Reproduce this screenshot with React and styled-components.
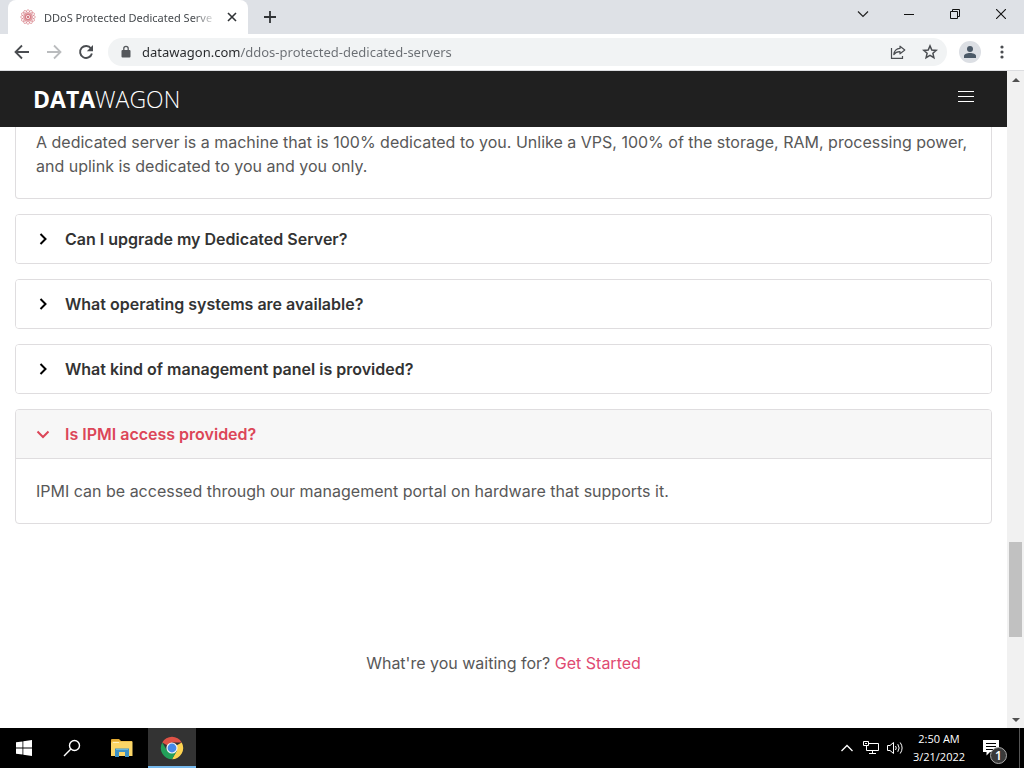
import React, { useState } from "react";
import styled, { createGlobalStyle, css } from "styled-components";

const uiFont = '"Noto Sans", "Open Sans", sans-serif';
const siteFont = 'Inter, "Liberation Sans", sans-serif';

const GlobalStyle = createGlobalStyle`
  *, *::before, *::after { box-sizing: border-box; }
  body { margin: 0; background: #fff; }
  button, input { font: inherit; margin: 0; padding: 0; border: 0; background: none; color: inherit; }
  button { cursor: pointer; }
  svg { display: block; flex: none; }
  p { margin: 0; }
`;

const Desktop = styled.div`
  display: flex;
  flex-direction: column;
  height: 100vh;
  overflow: hidden;
  font-family: ${uiFont};
`;

/* Browser chrome */
const TabStrip = styled.div`
  display: flex;
  height: 34px;
  flex: none;
  padding-left: 8px;
  background: #dee1e6;
`;

const Tab = styled.div`
  display: flex;
  align-items: center;
  width: 240px;
  padding: 0 9px 0 12px;
  border-radius: 8px 8px 0 0;
  background: #fff;
  color: #45494d;
  font-size: 11px;
`;

const TabTitle = styled.span`
  flex: 1;
  margin: 0 8px;
  white-space: nowrap;
  mask-image: linear-gradient(to left, transparent, #000 24px);
`;

const IconButton = styled.button`
  display: grid;
  place-items: center;
  width: ${(p) => p.$w || 32}px;
  height: ${(p) => p.$h || 32}px;
  flex: none;
  color: ${(p) => p.$color || "#4a4d51"};
`;

const WindowControls = styled.div`
  display: flex;
  margin-left: auto;
  height: 28px;
`;

const Toolbar = styled.div`
  display: flex;
  align-items: center;
  height: 37px;
  flex: none;
  padding: 0 6px;
  background: #fff;
  border-bottom: 1px solid #dcdde0;
`;

const AddressBar = styled.form`
  display: flex;
  align-items: center;
  flex: 1;
  height: 28px;
  margin: 0 7px 0 6px;
  padding: 0 1px 0 13px;
  border-radius: 14px;
  background: #f1f3f4;
  color: #55585c;
`;

const Url = styled.input`
  flex: 1;
  min-width: 0;
  height: 24px;
  margin-left: 11px;
  outline: none;
  font-size: 13px;
  color: #303236;
  background: linear-gradient(to right, #26282b 98px, #6a6e73 98px);
  background-clip: text;
  -webkit-text-fill-color: transparent;
`;

const Avatar = styled.span`
  display: grid;
  place-items: center;
  width: 22px;
  height: 22px;
  border-radius: 50%;
  background: #dcdfe4;
`;

/* Page */
const Viewport = styled.div`
  display: flex;
  flex: 1;
  min-height: 0;
`;

const Page = styled.div`
  flex: 1;
  min-width: 0;
  overflow: hidden;
  background: #fff;
  color: #585858;
  font: 400 16px/24px ${siteFont};
`;

const SiteHeader = styled.header`
  display: flex;
  align-items: center;
  justify-content: space-between;
  height: 56px;
  padding: 0 25px 0 33px;
  background: #202020;
`;

const Logo = styled.a`
  color: #fff;
  font: 300 23px/32px "Open Sans", sans-serif;
  text-decoration: none;

  b { font-weight: 700; }
`;

const Faq = styled.main`
  display: flex;
  flex-direction: column;
  gap: 15px;
  padding: 0 15px;
`;

const Card = styled.section`
  border: 1px solid #dfdddf;
  border-radius: 4px;
  overflow: hidden;

  ${(p) => p.$continued && css`
    border-top: 0;
    border-radius: 0 0 4px 4px;
  `}
`;

const Question = styled.button`
  display: flex;
  align-items: center;
  gap: 15px;
  width: 100%;
  height: 48px;
  padding: 0 20px;
  color: ${(p) => (p.$open ? "#dc4658" : "#333")};
  background: ${(p) => (p.$open ? "#f7f7f7" : "#fff")};
  font-weight: 600;
  text-align: left;
`;

const Answer = styled.p`
  padding: ${(p) => (p.$continued ? 3 : 20)}px 20px 20px;
  border-top: ${(p) => (p.$continued ? 0 : 1)}px solid #dfdddf;
`;

const CallToAction = styled.p`
  padding-top: 127px;
  text-align: center;

  a { color: #df4a72; text-decoration: none; }
`;

const ScrollTrack = styled.div`
  display: flex;
  flex-direction: column;
  align-items: center;
  width: 17px;
  flex: none;
  background: #f1f1f1;
`;

const ScrollSpace = styled.div`
  flex: ${(p) => p.$grow};
`;

const ScrollThumb = styled.div`
  flex: 95;
  width: 13px;
  background: #c1c1c1;
`;

/* Taskbar */
const Taskbar = styled.footer`
  display: flex;
  align-items: stretch;
  height: 40px;
  flex: none;
  background: #000;
  color: #fff;
`;

const TaskButton = styled.button`
  display: grid;
  place-items: center;
  width: ${(p) => p.$w || 48}px;
  color: #fff;
  ${(p) => p.$active && css`
    background: #333;
    border-bottom: 2px solid #76b9ed;
    padding-top: 2px;
  `}
`;

const Tray = styled.div`
  display: flex;
  margin-left: auto;
`;

const Clock = styled.time`
  display: flex;
  flex-direction: column;
  justify-content: center;
  width: 64px;
  text-align: center;
  font-family: "Open Sans", sans-serif;
  font-size: 11px;
  line-height: 18px;
  white-space: nowrap;
`;

const ActionCenter = styled(TaskButton)`
  position: relative;
  padding-right: 8px;
`;

const CountBadge = styled.span`
  position: absolute;
  right: 12px;
  bottom: 4px;
  width: 17px;
  height: 17px;
  border: 1px solid #aaa;
  border-radius: 50%;
  background: #3a3a3a;
  font-size: 12px;
  font-weight: 600;
  line-height: 15px;
  text-align: center;
`;

const ShowDesktop = styled.button`
  width: 5px;
  border-left: 1px solid #555;
`;

const Favicon = () => (
  <svg width="16" height="16" viewBox="0 0 16 16" fill="none" stroke="#d4737c" strokeWidth=".6">
    {[0, 30, 60, 90, 120, 150].map((a) => (
      <ellipse key={a} cx="8" cy="8" rx="7.4" ry="2.400" transform={`rotate(${a} 8 8)`} />
    ))}
    <circle cx="8" cy="8" r="1" fill="#c8505c" />
  </svg>
);

const Chevron = ({ open }) => (
  <svg width="14" height="14" viewBox="0 0 14 14" fill="none" stroke={open ? "currentColor" : "#000"} strokeWidth="2">
    <path d={open ? "M1.500 4.500 7 10l5.500-5.500" : "M4.500 2 9.500 7l-5 5"} />
  </svg>
);

const ShareIcon = () => (
  <svg width="16" height="16" viewBox="0 0 16 16" fill="none" stroke="currentColor" strokeWidth="1.200">
    <path d="M1.500 4V14.400H12.500V12" />
    <path d="M10 2.200 14.800 6 10 9.800V7.700C7 7.600 5.200 8.700 3.800 10.600 4.200 7.200 6 4.700 10 4.400Z" strokeLinejoin="round" />
  </svg>
);

const ExplorerIcon = () => (
  <svg width="22" height="20" viewBox="0 0 22 20">
    <path d="M0 2Q0 1 1 1H8L10 3H21V18H0Z" fill="#e3aa32" />
    <path d="M1 3.500H21.500V18H0V4.500Z" fill="#fbd667" />
    <path d="M2 4.500H8" stroke="#fff3bd" />
    <path d="M4 19V10.500H18V19H14V14H8V19Z" fill="#3c91c5" />
    <path d="M5 11.500H17" stroke="#69b6dc" />
  </svg>
);

const ChromeIcon = () => (
  <svg width="24" height="24" viewBox="0 0 24 24">
    <path d="M12 12 2.270 6.380A11.240 11.240 0 0 1 21.730 6.380H12Z" fill="#de5246" />
    <path d="M12 12 21.730 6.380A11.240 11.240 0 0 1 12 23.240L16.870 14.810Z" fill="#fdd250" />
    <path d="M12 12 16.870 14.810 12 23.240A11.240 11.240 0 0 1 2.270 6.380L7.130 14.810Z" fill="#23a05a" />
    <circle cx="12" cy="12" r="5.600" fill="#f4f4f4" />
    <circle cx="12" cy="12" r="4.400" fill="#4788e8" />
  </svg>
);

const questions = [
  { q: "Can I upgrade my Dedicated Server?", a: "Yes, your server can be upgraded at any time." },
  { q: "What operating systems are available?", a: "Most Linux distributions and Windows Server are available." },
  { q: "What kind of management panel is provided?", a: "Every server includes access to our management portal." },
  { q: "Is IPMI access provided?", a: "IPMI can be accessed through our management portal on hardware that supports it." },
];

export default function App() {
  const [openIndex, setOpenIndex] = useState(3);

  return (
    <Desktop>
      <GlobalStyle />
      <TabStrip>
        <Tab>
          <Favicon />
          <TabTitle>DDoS Protected Dedicated Serve</TabTitle>
          <IconButton $w={14} $h={16} $color="#303336" aria-label="Close tab">
            <svg width="10" height="10" viewBox="0 0 10 10" stroke="currentColor" strokeWidth="1.600"><path d="M1 1 9 9M9 1 1 9" /></svg>
          </IconButton>
        </Tab>
        <IconButton $w={44} $h={34} $color="#303336" aria-label="New tab">
          <svg width="12" height="12" viewBox="0 0 12 12" stroke="currentColor" strokeWidth="1.800"><path d="M6 0V12M0 6H12" /></svg>
        </IconButton>
        <WindowControls>
          <IconButton $w={46} $h={28} $color="#222" aria-label="Search tabs">
            <svg width="12" height="8" viewBox="0 0 12 8" fill="none" stroke="currentColor" strokeWidth="1.200"><path d="M1 1.500 6 6.500 11 1.500" /></svg>
          </IconButton>
          <IconButton $w={46} $h={28} $color="#111" aria-label="Minimize">
            <svg width="10" height="10" viewBox="0 0 10 10" stroke="currentColor"><path d="M0 5.500H10" /></svg>
          </IconButton>
          <IconButton $w={46} $h={28} $color="#111" aria-label="Restore">
            <svg width="10" height="10" viewBox="0 0 10 10" fill="none" stroke="currentColor"><path d="M.5 2.500H7.500V9.500H.5ZM2.500 2.500V.5H9.500V7.500H7.500" /></svg>
          </IconButton>
          <IconButton $w={46} $h={28} $color="#111" aria-label="Close window">
            <svg width="10" height="10" viewBox="0 0 10 10" stroke="currentColor" strokeWidth="1.100"><path d="M0 0 10 10M10 0 0 10" /></svg>
          </IconButton>
        </WindowControls>
      </TabStrip>

      <Toolbar>
        <IconButton aria-label="Back">
          <svg width="16" height="16" viewBox="0 0 16 16" fill="none" stroke="currentColor" strokeWidth="1.800"><path d="M15 8H2.500M8 1.500 1.500 8 8 14.500" /></svg>
        </IconButton>
        <IconButton $color="#babcbe" aria-label="Forward">
          <svg width="16" height="16" viewBox="0 0 16 16" fill="none" stroke="currentColor" strokeWidth="1.800"><path d="M1 8H13.500M8 1.500 14.500 8 8 14.500" /></svg>
        </IconButton>
        <IconButton aria-label="Reload">
          <svg width="16" height="16" viewBox="0 0 16 16"><path d="M13 4.500A6 6 0 1 0 13.900 9.500" fill="none" stroke="currentColor" strokeWidth="1.900" /><path d="M15 1V7.200H8.800Z" fill="currentColor" /></svg>
        </IconButton>
        <AddressBar onSubmit={(e) => e.preventDefault()}>
          <svg width="10" height="14" viewBox="0 0 10 14"><rect x=".5" y="5" width="9" height="7.500" rx="1" fill="currentColor" /><path d="M2.800 5.500V3.500a2.200 2.200 0 0 1 4.400 0V5.500" fill="none" stroke="currentColor" strokeWidth="1.300" /></svg>
          <Url aria-label="Address" defaultValue="datawagon.com/ddos-protected-dedicated-servers" spellCheck={false} />
          <IconButton type="button" $h={28} aria-label="Share this page"><ShareIcon /></IconButton>
          <IconButton type="button" $h={28} aria-label="Bookmark this page">
            <svg width="16" height="16" viewBox="0 0 16 16" fill="none" stroke="currentColor" strokeWidth="1.500"><path d="M8 1.900 9.800 6 14.200 6.400 10.900 9.300 11.900 13.700 8 11.300 4.100 13.700 5.100 9.300 1.800 6.400 6.200 6Z" /></svg>
          </IconButton>
        </AddressBar>
        <IconButton aria-label="Profile">
          <Avatar><svg width="12" height="12" viewBox="0 0 12 12" fill="#4b5967"><circle cx="6" cy="3" r="3" /><path d="M0 12V10C0 8 3 7 6 7S12 8 12 10V12Z" /></svg></Avatar>
        </IconButton>
        <IconButton aria-label="Browser menu">
          <svg width="4" height="14" viewBox="0 0 4 14" fill="currentColor"><circle cx="2" cy="2" r="1.600" /><circle cx="2" cy="7" r="1.600" /><circle cx="2" cy="12" r="1.600" /></svg>
        </IconButton>
      </Toolbar>

      <Viewport>
        <Page>
          <SiteHeader>
            <Logo href="#home"><b>DATA</b>WAGON</Logo>
            <IconButton $color="#fff" aria-label="Menu">
              <svg width="16" height="16" viewBox="0 0 16 16" stroke="currentColor"><path d="M0 .5H16M0 5.500H16M0 10.500H16" /></svg>
            </IconButton>
          </SiteHeader>
          <Faq>
            <Card $continued>
              <Answer $continued>
                A dedicated server is a machine that is 100% dedicated to you. Unlike a VPS, 100% of the storage, RAM,
                processing power, and uplink is dedicated to you and you only.
              </Answer>
            </Card>
            {questions.map(({ q, a }, i) => {
              const open = i === openIndex;
              return (
                <Card key={q}>
                  <Question $open={open} aria-expanded={open} onClick={() => setOpenIndex(open ? -1 : i)}>
                    <Chevron open={open} />
                    {q}
                  </Question>
                  {open && <Answer>{a}</Answer>}
                </Card>
              );
            })}
          </Faq>
          <CallToAction>
            What're you waiting for? <a href="#start">Get Started</a>
          </CallToAction>
        </Page>
        <ScrollTrack>
          <IconButton $w={17} $h={17} $color="#505050" aria-label="Scroll up">
            <svg width="8" height="4" viewBox="0 0 8 4" fill="currentColor"><path d="M0 4 4 0 8 4Z" /></svg>
          </IconButton>
          <ScrollSpace $grow={454} />
          <ScrollThumb />
          <ScrollSpace $grow={74} />
          <IconButton $w={17} $h={17} $color="#505050" aria-label="Scroll down">
            <svg width="8" height="4" viewBox="0 0 8 4" fill="currentColor"><path d="M0 0 4 4 8 0Z" /></svg>
          </IconButton>
        </ScrollTrack>
      </Viewport>

      <Taskbar>
        <TaskButton aria-label="Start">
          <svg width="16" height="16" viewBox="0 0 16 16" fill="#fff"><path d="M0 2.300 6.500 1.400V7.600H0ZM7.300 1.300 16 0V7.600H7.300ZM0 8.400H6.500V14.600L0 13.700ZM7.300 8.400H16V16L7.300 14.700Z" /></svg>
        </TaskButton>
        <TaskButton aria-label="Search">
          <svg width="18" height="18" viewBox="0 0 18 18" fill="none" stroke="#fff" strokeWidth="1.400"><circle cx="11.500" cy="6.500" r="5" /><path d="M7.900 10.100 1 17" /></svg>
        </TaskButton>
        <TaskButton $w={52} aria-label="File Explorer"><ExplorerIcon /></TaskButton>
        <TaskButton $active aria-label="Google Chrome"><ChromeIcon /></TaskButton>
        <Tray>
          <TaskButton $w={24} aria-label="Show hidden icons">
            <svg width="12" height="8" viewBox="0 0 12 8" fill="none" stroke="#fff" strokeWidth="1.300"><path d="M.5 7 6 1.500 11.500 7" /></svg>
          </TaskButton>
          <TaskButton $w={24} aria-label="Network">
            <svg width="17" height="14" viewBox="0 0 17 14" fill="none" stroke="#fff"><path d="M6 2.500H15.500V9.500H3.500M9.500 9.500V12.500M6 12.500H13M3.500 5V9.500M.5.500H5.500V4.500H.5Z" /><path d="M2 2.500H4" /></svg>
          </TaskButton>
          <TaskButton $w={24} aria-label="Volume">
            <svg width="17" height="14" viewBox="0 0 17 14" fill="none" stroke="#fff"><path d="M.5 4.500H3L6.500 1.500V12.500L3 9.500H.5Z" /><path d="M8.500 5Q10 7 8.500 9M10.800 3.200Q13.500 7 10.800 10.800M13.200 1.500Q17 7 13.200 12.500" /></svg>
          </TaskButton>
          <Clock dateTime="2022-03-21T02:50"><span>2:50 AM</span><span>3/21/2022</span></Clock>
          <ActionCenter $w={48} aria-label="Notifications">
            <svg width="16" height="16" viewBox="0 0 16 16"><path d="M0 0H16V12H7L3.500 15.500V12H0Z" fill="#fff" /><path d="M3 3.500H13M3 6.500H13M3 9.500H10" stroke="#000" /></svg>
            <CountBadge>1</CountBadge>
          </ActionCenter>
          <ShowDesktop aria-label="Show desktop" />
        </Tray>
      </Taskbar>
    </Desktop>
  );
}
